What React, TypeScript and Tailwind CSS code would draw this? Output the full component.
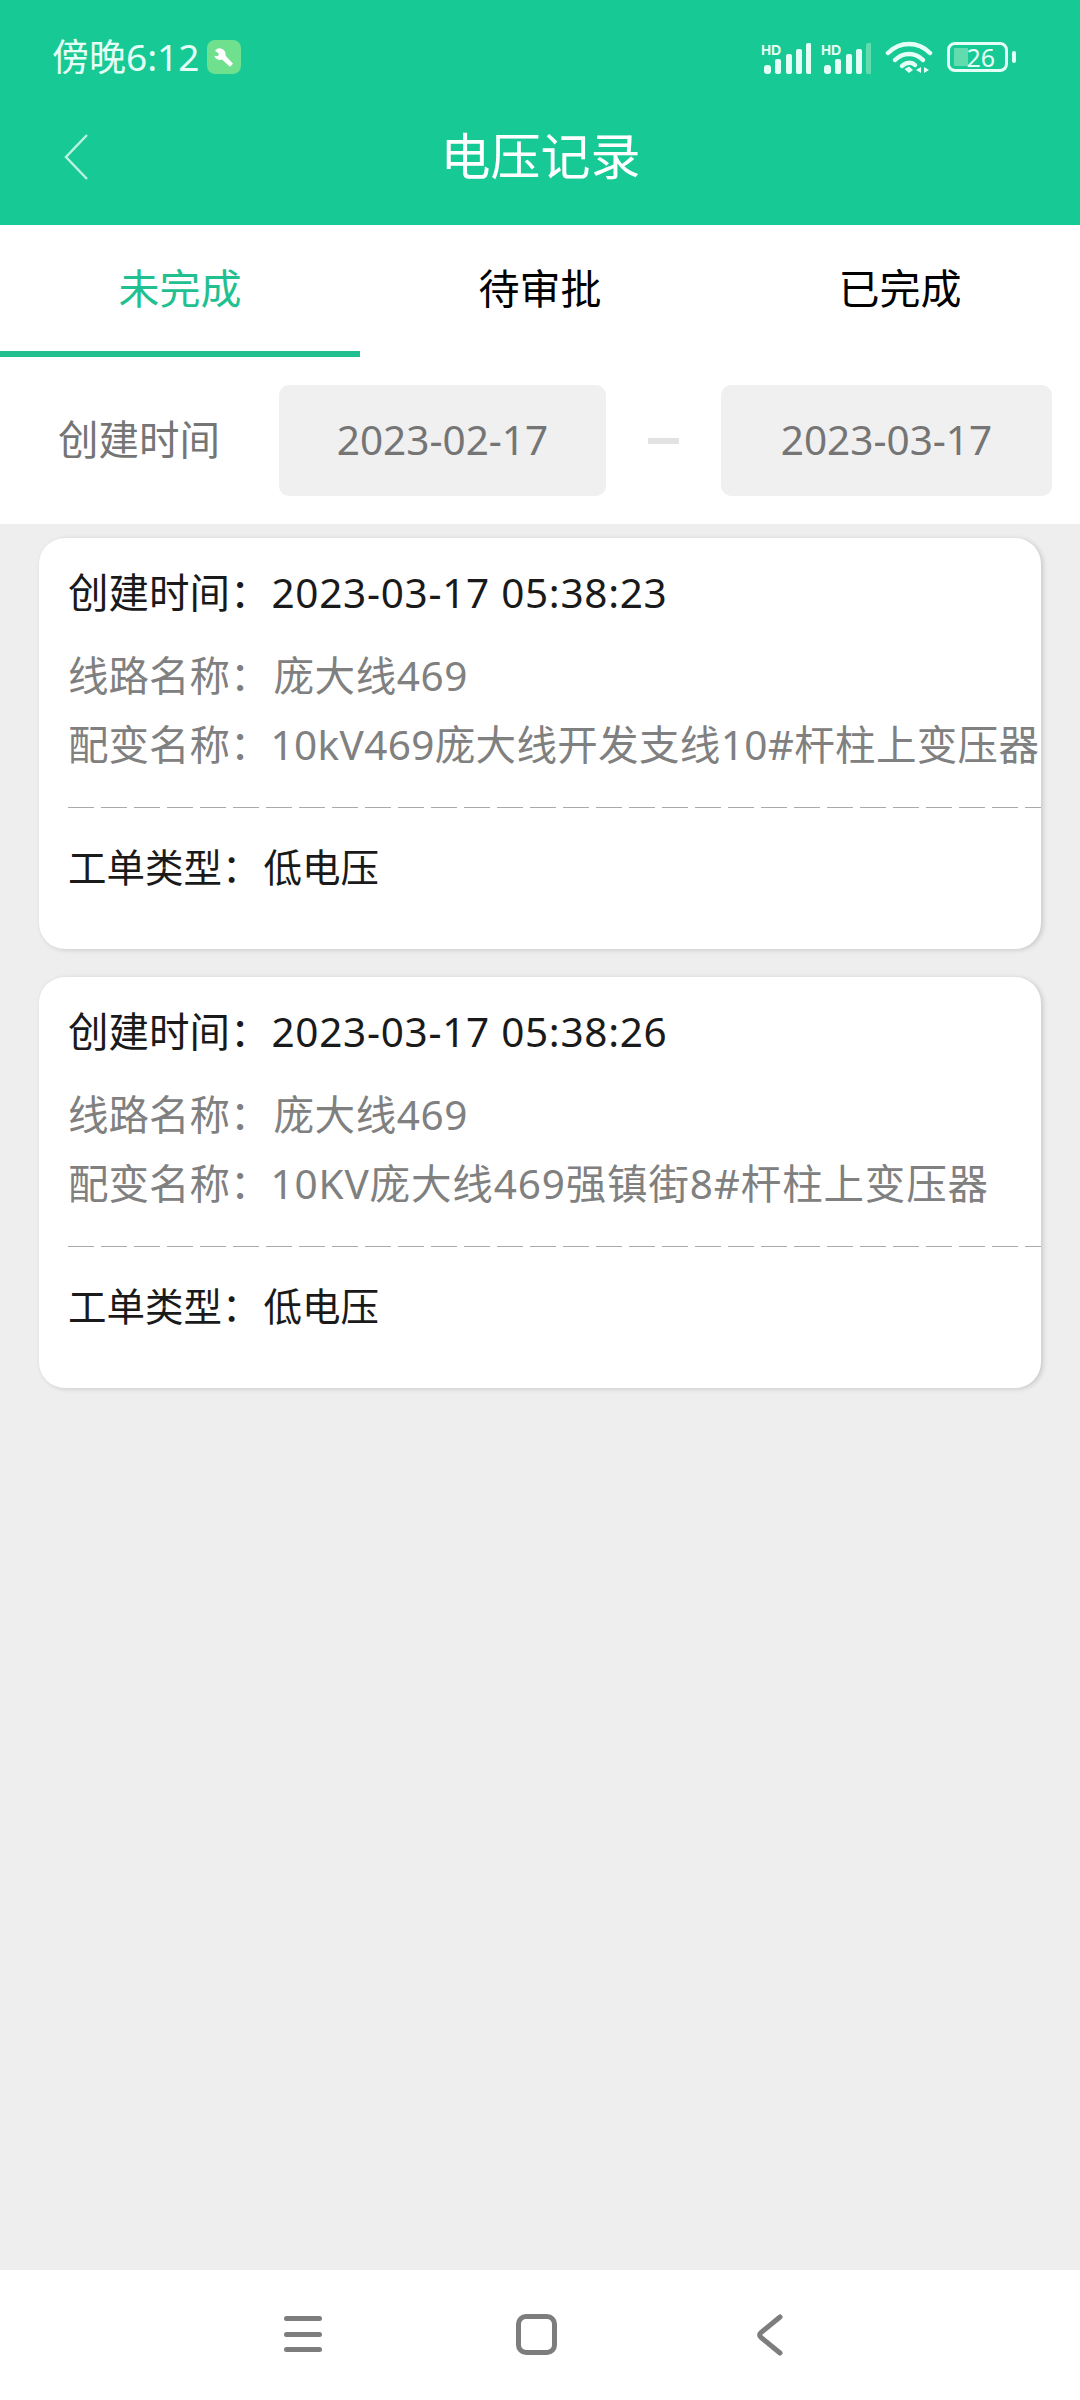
import React from "react";

const font = "font-['Noto_Sans','Noto_Sans_CJK_SC',sans-serif]";

function Signal({ last }: { last: string }) {
  return (
    <svg width="50" height="33" viewBox="0 0 50 33" className="block">
      <text x="0" y="14" fontSize="14" fontWeight="700" fill="#e6fff6" fontFamily="'Liberation Sans',sans-serif">HD</text>
      <rect x="3" y="24" width="7" height="9" rx="3" fill="#e6fff6" />
      <rect x="14" y="18" width="6" height="15" rx="2" fill="#e6fff6" />
      <rect x="25" y="13" width="6" height="20" rx="2" fill="#e6fff6" />
      <rect x="35" y="8" width="6" height="25" rx="2" fill="#e6fff6" />
      <rect x="45" y="2" width="5.5" height="31" rx="2" fill={last} />
    </svg>
  );
}

function Card({ time, name, line, lineClass }: { time: string; name: string; line: string; lineClass: string }) {
  return (
    <div className="h-[411px] rounded-[26px] bg-white shadow-[2px_1px_5px_rgba(0,0,0,0.16)] pl-[29px] pt-[27px]">
      <div className="h-[56px] flex items-center whitespace-nowrap text-[40.5px] leading-[56px] text-[#1a1a1a]">
        <span>创建时间：</span>
        <span className="ml-[1px] tracking-[0.7px]">{time}</span>
      </div>
      <div className="mt-[27px] h-[56px] flex items-center whitespace-nowrap text-[40.5px] leading-[56px] text-[#808080]">
        <span>线路名称：</span>
        <span className="ml-[3px] tracking-[0.6px]">{name}</span>
      </div>
      <div className="mt-[13px] h-[56px] flex items-center whitespace-nowrap text-[40.5px] leading-[56px] text-[#808080]">
        <span>配变名称：</span>
        <span className={lineClass}>{line}</span>
      </div>
      <div className="mt-[34px] h-[1px] bg-[repeating-linear-gradient(90deg,#aaaaaa_0,#aaaaaa_26px,transparent_26px,transparent_33px)]" />
      <div className="mt-[33px] h-[52px] flex items-center whitespace-nowrap text-[38.5px] leading-[52px] text-[#1a1a1a]">
        <span>工单类型：</span>
        <span className="ml-[3px]">低电压</span>
      </div>
    </div>
  );
}

export default function App() {
  return (
    <div className={`${font} w-[1080px] h-[2400px] flex flex-col bg-[#eeeeee]`}>
      <div className="h-[225px] bg-[#17c994] shrink-0">
        <div className="h-[114px] pl-[52px] pr-[64px] flex items-center justify-between">
          <div className="flex items-center">
            <span className="text-[37px] leading-[40px] text-[#e6fff6]">傍晚6:12</span>
            <span className="ml-[8px] w-[34px] h-[34px] rounded-[8px] bg-[#6ee08e] flex items-center justify-center">
              <svg width="24" height="24" viewBox="0 0 24 24">
                <path d="M9 3.5a6 6 0 0 0-6 2.2l4 3-1.2 2.6-3.6-.6a6 6 0 0 0 7.8 3.8l8 7.2 3-3-7.4-8A6 6 0 0 0 9 3.500z" fill="#ffffff" />
              </svg>
            </span>
          </div>
          <div className="flex items-center">
            <Signal last="#e6fff6" />
            <span className="w-[10px]" />
            <Signal last="#62dcae" />
            <span className="w-[14px]" />
            <svg width="48" height="34" viewBox="0 0 48 34" className="block">
              <path d="M3 13C15 1 33 1 45 13" fill="none" stroke="#e6fff6" strokeWidth="4.5" strokeLinecap="round" />
              <path d="M10 20C18 12 30 12 38 20" fill="none" stroke="#e6fff6" strokeWidth="4.5" strokeLinecap="round" />
              <path d="M17 26C21 22 27 22 30 25" fill="none" stroke="#e6fff6" strokeWidth="4.5" strokeLinecap="round" />
              <path d="M19.500 29L24 26.500L28 30L24 33Z" fill="#e6fff6" />
              <path d="M36 27V33L31 30Z M39 27V33L44 30Z" fill="#e6fff6" />
            </svg>
            <span className="w-[14px]" />
            <span className="relative w-[61px] h-[30px] rounded-[8px] border-[3px] border-[#e6fff6] flex items-center justify-end pr-[10px]">
              <span className="absolute left-[4px] top-[3px] bottom-[3px] w-[14px] bg-[#62dcae] rounded-[1px]" />
              <span className="relative text-[25px] leading-[24px] text-[#e6fff6]">26</span>
            </span>
            <span className="ml-[4px] w-[4px] h-[12px] rounded-[2px] bg-[#e6fff6]" />
          </div>
        </div>
        <div className="relative h-[84px] flex items-center justify-center">
          <svg width="26" height="46" viewBox="0 0 26 46" className="absolute left-[64px] top-[20px]">
            <path d="M23 1L2 23L23 45" fill="none" stroke="#b9f3df" strokeWidth="2.500" />
          </svg>
          <span className="text-[50px] leading-[60px] text-white ml-[1px]">电压记录</span>
        </div>
      </div>

      <div className="h-[132px] bg-white flex shrink-0">
        <div className="w-[360px] flex flex-col">
          <div className="flex-1 flex items-center justify-center text-[41px] leading-[50px] text-[#22bf90]">未完成</div>
          <div className="h-[6px] bg-[#22bf90]" />
        </div>
        <div className="w-[360px] flex items-center justify-center text-[41px] leading-[50px] text-black pb-[6px]">待审批</div>
        <div className="w-[360px] flex items-center justify-center text-[41px] leading-[50px] text-black pb-[6px]">已完成</div>
      </div>

      <div className="h-[167px] bg-white flex pt-[28px] shrink-0">
        <div className="w-[279px] h-[111px] flex items-center pl-[58px] text-[40.5px] text-[#757575]">创建时间</div>
        <div className="w-[327px] h-[111px] rounded-[10px] bg-[#f0f0f0] flex items-center justify-center text-[40.5px] text-[#757575]">2023-02-17</div>
        <div className="w-[115px] h-[111px] flex items-center justify-center">
          <span className="w-[31px] h-[6px] bg-[#e2e2e2]" />
        </div>
        <div className="w-[331px] h-[111px] rounded-[10px] bg-[#f0f0f0] flex items-center justify-center text-[40.5px] text-[#757575]">2023-03-17</div>
      </div>

      <div className="flex-1 pl-[39px] pr-[39px] pt-[14px] flex flex-col gap-[28px]">
        <Card time="2023-03-17 05:38:23" name="庞大线469" line="10kV469庞大线开发支线10#杆柱上变压器" lineClass="tracking-[0.35px]" />
        <Card time="2023-03-17 05:38:26" name="庞大线469" line="10KV庞大线469强镇街8#杆柱上变压器" lineClass="tracking-[0.85px]" />
      </div>

      <div className="h-[130px] bg-white shrink-0 relative flex items-start">
        <div className="pl-[284px] pt-[46px]">
          <div className="w-[38px] h-[5px] rounded-full bg-[#7d7d7d]" />
          <div className="mt-[11px] w-[38px] h-[5px] rounded-full bg-[#7d7d7d]" />
          <div className="mt-[10px] w-[38px] h-[5px] rounded-full bg-[#7d7d7d]" />
        </div>
        <div className="ml-[194px] mt-[44px] w-[41px] h-[41px] rounded-[10px] border-[5px] border-[#7d7d7d]" />
        <svg width="28" height="42" viewBox="0 0 28 42" className="ml-[199px] mt-[44px]">
          <path d="M24 3L5 18.500Q2.500 21 5 23.500L24 39" fill="none" stroke="#7d7d7d" strokeWidth="5" strokeLinecap="round" />
        </svg>
      </div>
    </div>
  );
}
